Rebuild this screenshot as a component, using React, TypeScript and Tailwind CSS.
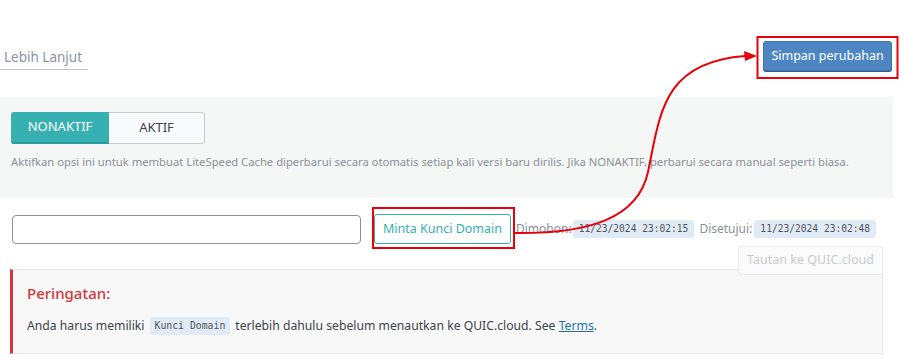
export default function App() {
  return (
    <div className="relative w-[904px] h-[358px] overflow-hidden bg-white font-['Noto_Sans',sans-serif] text-[#3c434a]">
      {/* Top bar */}
      <div className="flex items-start justify-between h-[97px]">
        <div className="mt-[47px] w-[88px] border-b border-[#c3c4c7] pl-[4px] pb-[2px] text-[13.5px] leading-[20px] text-[#8a94a6]">
          Lebih Lanjut
        </div>
        <button className="mt-[41px] mr-[12px] h-[30px] w-[129px] rounded-[3px] border border-[#3f73ad] bg-[#4e86c3] text-[12.5px] text-white shadow-[0_1px_0_#2f5f94]">
          Simpan perubahan
        </button>
      </div>

      {/* Auto update section */}
      <div className="w-[893px] h-[101px] bg-[#f5f6f6] px-[11px] pt-[15px]">
        <div className="flex w-[194px] h-[32px] rounded-[3px] overflow-hidden text-[13px]">
          <div className="flex w-[98px] items-center justify-center bg-[#36b0b0] text-white border-b-2 border-[#2a9c9c]">
            NONAKTIF
          </div>
          <div className="flex flex-1 items-center justify-center bg-[#f9fafb] text-[#3c434a] border border-l-0 border-[#c8cacc] rounded-r-[3px]">
            AKTIF
          </div>
        </div>
        <p className="mt-[9px] text-[11.25px] leading-[18px] text-[#8b9099]">
          Aktifkan opsi ini untuk membuat LiteSpeed Cache diperbarui secara otomatis setiap kali versi baru dirilis. Jika NONAKTIF, perbarui secara manual seperti biasa.
        </p>
      </div>

      {/* Domain key row */}
      <div className="flex items-center mt-[16px] pl-[12px] h-[30px] text-[12px]">
        <div className="w-[349px] h-[29px] rounded-[4px] border border-[#8c8f94] bg-white" />
        <button className="ml-[13px] h-[30px] w-[137px] rounded-[3px] border border-[#36b0b0] bg-white text-[12.5px] text-[#36b0b0]">
          Minta Kunci Domain
        </button>
        <span className="ml-[5px] text-[#8b9099]">Dimohon:</span>
        <code className="ml-[1px] rounded-[3px] bg-[#e1ebf5] px-[6px] py-[1px] font-['DejaVu_Sans_Mono',monospace] text-[9.6px] leading-[16px] text-[#50575e]">
          11/23/2024 23:02:15
        </code>
        <span className="ml-[5px] text-[#8b9099]">Disetujui:</span>
        <code className="ml-[2px] rounded-[3px] bg-[#e1ebf5] px-[6px] py-[1px] font-['DejaVu_Sans_Mono',monospace] text-[9.6px] leading-[16px] text-[#50575e]">
          11/23/2024 23:02:48
        </code>
      </div>

      {/* Warning box with disabled button */}
      <div className="relative ml-[10px] mt-[25px] w-[873px] h-[85px] bg-[#f8f8f8] border border-l-0 border-[#e4e4e4] border-l-[3px] border-l-[#d63638] pl-[14px]">
        <div className="absolute right-[-1px] top-[-24px] flex h-[29px] w-[145px] items-center justify-center rounded-[3px] border border-[#ececec] bg-[#fbfbfb] text-[12.5px] text-[#c8cbcf]">
          Tautan ke QUIC.cloud
        </div>
        <div className="pt-[12px] text-[15px] font-medium leading-[22px] text-[#d63638]">Peringatan:</div>
        <div className="mt-[13px] flex items-center text-[12.2px] text-[#3c434a]">
          <span>Anda harus memiliki</span>
          <code className="mx-[5px] rounded-[3px] bg-[#e1ebf5] px-[5px] py-[1px] font-['DejaVu_Sans_Mono',monospace] text-[9.8px] leading-[16px] text-[#50575e]">
            Kunci Domain
          </code>
          <span>
            terlebih dahulu sebelum menautkan ke QUIC.cloud. See{" "}
            <a className="text-[#2271b1] underline">Terms</a>.
          </span>
        </div>
      </div>

      {/* Annotation overlay */}
      <svg className="pointer-events-none absolute left-0 top-0" width="904" height="358" viewBox="0 0 904 358" fill="none">
        <rect x="757.5" y="37" width="140" height="41" stroke="#e8000b" strokeWidth="2" />
        <rect x="373" y="208" width="141" height="40" stroke="#e8000b" strokeWidth="2" />
        <path d="M514 233 C 590 234, 638 218, 648 172 C 660 115, 662 62, 745 56" stroke="#e8000b" strokeWidth="2" />
        <path d="M757 56 L744 51 L745 61 Z" fill="#e8000b" />
      </svg>
    </div>
  )
}
